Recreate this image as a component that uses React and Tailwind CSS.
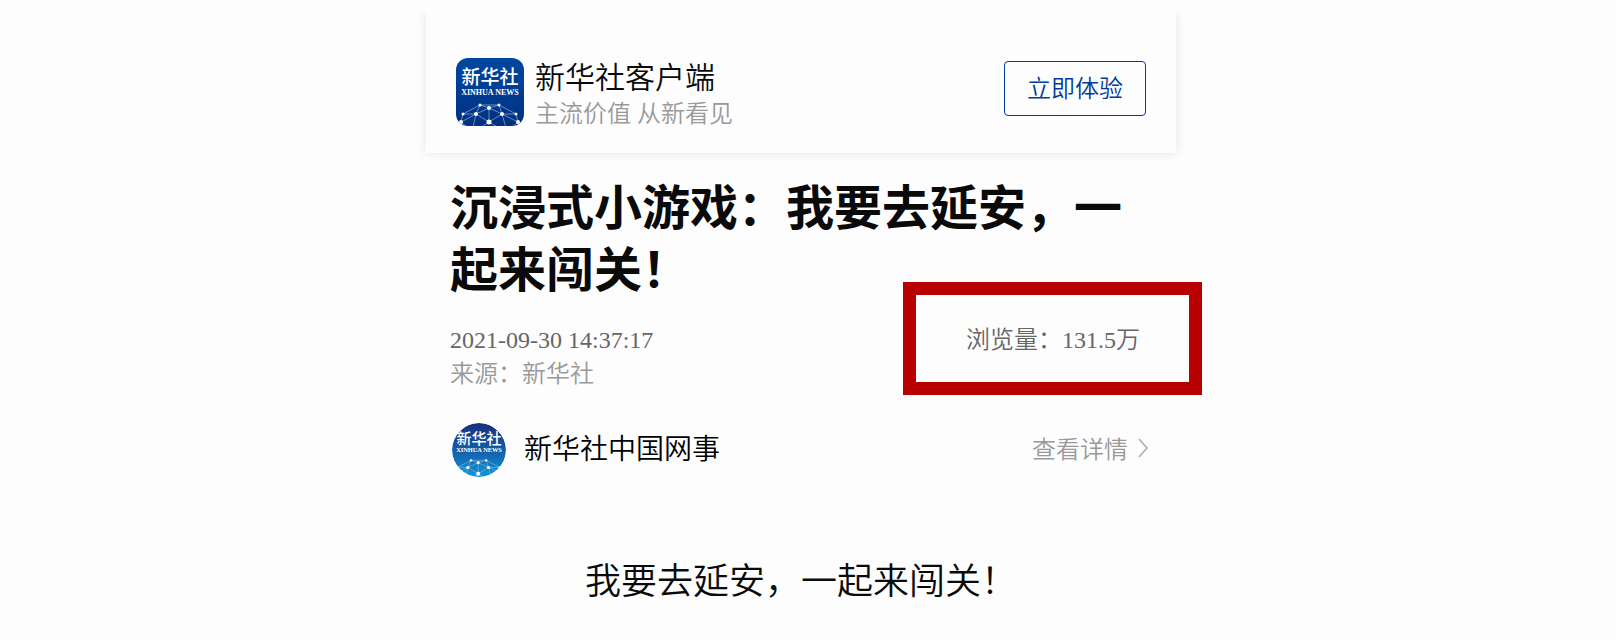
import { useId } from 'react';

function XinhuaLogo({ round, className }) {
  const id = useId();
  return (
    <svg viewBox="0 0 68 68" className={className} role="img" aria-label="新华社">
      <defs>
        <linearGradient id={`${id}bg`} x1="0" y1="0" x2="0" y2="1">
          <stop offset="0" stopColor={round ? '#172f7c' : '#0047a0'} />
          <stop offset="0.5" stopColor={round ? '#155ea8' : '#003c92'} />
          <stop offset="1" stopColor={round ? '#0e97d8' : '#00307f'} />
        </linearGradient>
        <clipPath id={`${id}clip`}>
          <rect width="68" height="68" rx={round ? 34 : 12} />
        </clipPath>
      </defs>
      <g clipPath={`url(#${id}clip)`}>
        <rect width="68" height="68" fill={`url(#${id}bg)`} />
        <g fill="#fff" textAnchor="middle">
          <text
            x="34"
            y="26"
            fontSize="19"
            fontWeight="500"
            fontFamily="'Noto Sans CJK SC', sans-serif"
          >
            新华社
          </text>
          <text
            x="34"
            y="37"
            fontSize="8"
            fontWeight="700"
            fontFamily="'Liberation Serif', serif"
          >
            XINHUA NEWS
          </text>
        </g>
        {/* globe network */}
        <path
          d="M24 47H43L60 56L62 64M24 47L7 56L5 64M24 47L33 50L43 47L46 56L33 50L20 56L24 47M7 56H20L33 64L46 56H60M20 56L5 64L12 70M46 56L62 64L55 70M20 56L17 70M46 56L50 70M33 50V64L24 70M33 64L43 70"
          fill="none"
          stroke="#a9c6ea"
          strokeWidth="0.6"
        />
        <g fill="#fff">
          <circle cx="24" cy="47" r="1.5" />
          <circle cx="43" cy="47" r="1.5" />
          <circle cx="33" cy="50" r="2" />
          <circle cx="7" cy="56" r="1.5" />
          <circle cx="20" cy="56" r="2" />
          <circle cx="46" cy="56" r="2" />
          <circle cx="60" cy="56" r="1.5" />
          <circle cx="5" cy="64" r="2" />
          <circle cx="33" cy="64" r="2.5" />
          <circle cx="62" cy="64" r="2" />
        </g>
      </g>
    </svg>
  );
}

export default function App() {
  return (
    <div className="min-h-screen bg-[#fdfdfd] pt-[13px] pr-[14px] pb-6 font-['Liberation_Serif','Noto_Sans_CJK_SC',serif] font-[350] text-[#0a0a0a]">
      <div className="mx-auto max-w-[750px]">
        {/* app banner */}
        <header className="flex items-start justify-between px-[30px] pt-[45px] pb-[23px] shadow-[0_0_10px_rgba(0,0,0,0.1)] [clip-path:inset(0_-12px_-12px)]">
          <div className="flex items-start gap-[11px]">
            <XinhuaLogo className="h-[68px] w-[68px]" />
            <div>
              <p className="text-[30px] leading-10">新华社客户端</p>
              <p className="text-2xl leading-8 text-[#999]">主流价值 从新看见</p>
            </div>
          </div>
          <button className="mt-[3px] h-[55px] w-[142px] rounded-sm border border-[#003c9b] text-2xl text-[#003c9b]">
            立即体验
          </button>
        </header>

        <main className="px-6 pt-[25px]">
          <h1 className="text-5xl leading-[62px] font-bold">
            沉浸式小游戏：我要去延安，一起来闯关！
          </h1>

          <div className="mt-[21px] flex items-start justify-between text-2xl leading-[34px] text-[#666]">
            <div>
              <time>2021-09-30 14:37:17</time>
              <p className="text-[#999]">来源：新华社</p>
            </div>
            <div className="relative pr-3">
              浏览量：131.5万
              <span className="absolute -top-[41px] -right-[50px] h-[113px] w-[299px] border-[13px] border-[#b90000]" />
            </div>
          </div>

          {/* account */}
          <div className="mt-8 flex items-center justify-between">
            <div className="flex items-center gap-[18px]">
              <XinhuaLogo round className="ml-[2px] h-[54px] w-[54px] rounded-full" />
              <span className="text-[28px] leading-10 text-black">新华社中国网事</span>
            </div>
            <a href="#" className="flex items-center gap-[10px] text-2xl text-[#999]">
              查看详情
              <svg viewBox="0 0 10 20" className="mr-1 mb-1 h-5 w-[10px]" fill="none" stroke="#aaa" strokeWidth="1.5">
                <path d="M1 1L9 10L1 19" />
              </svg>
            </a>
          </div>

          <p className="mt-[78px] text-center text-4xl leading-[54px]">
            我要去延安，一起来闯关！
          </p>
        </main>
      </div>
    </div>
  );
}
